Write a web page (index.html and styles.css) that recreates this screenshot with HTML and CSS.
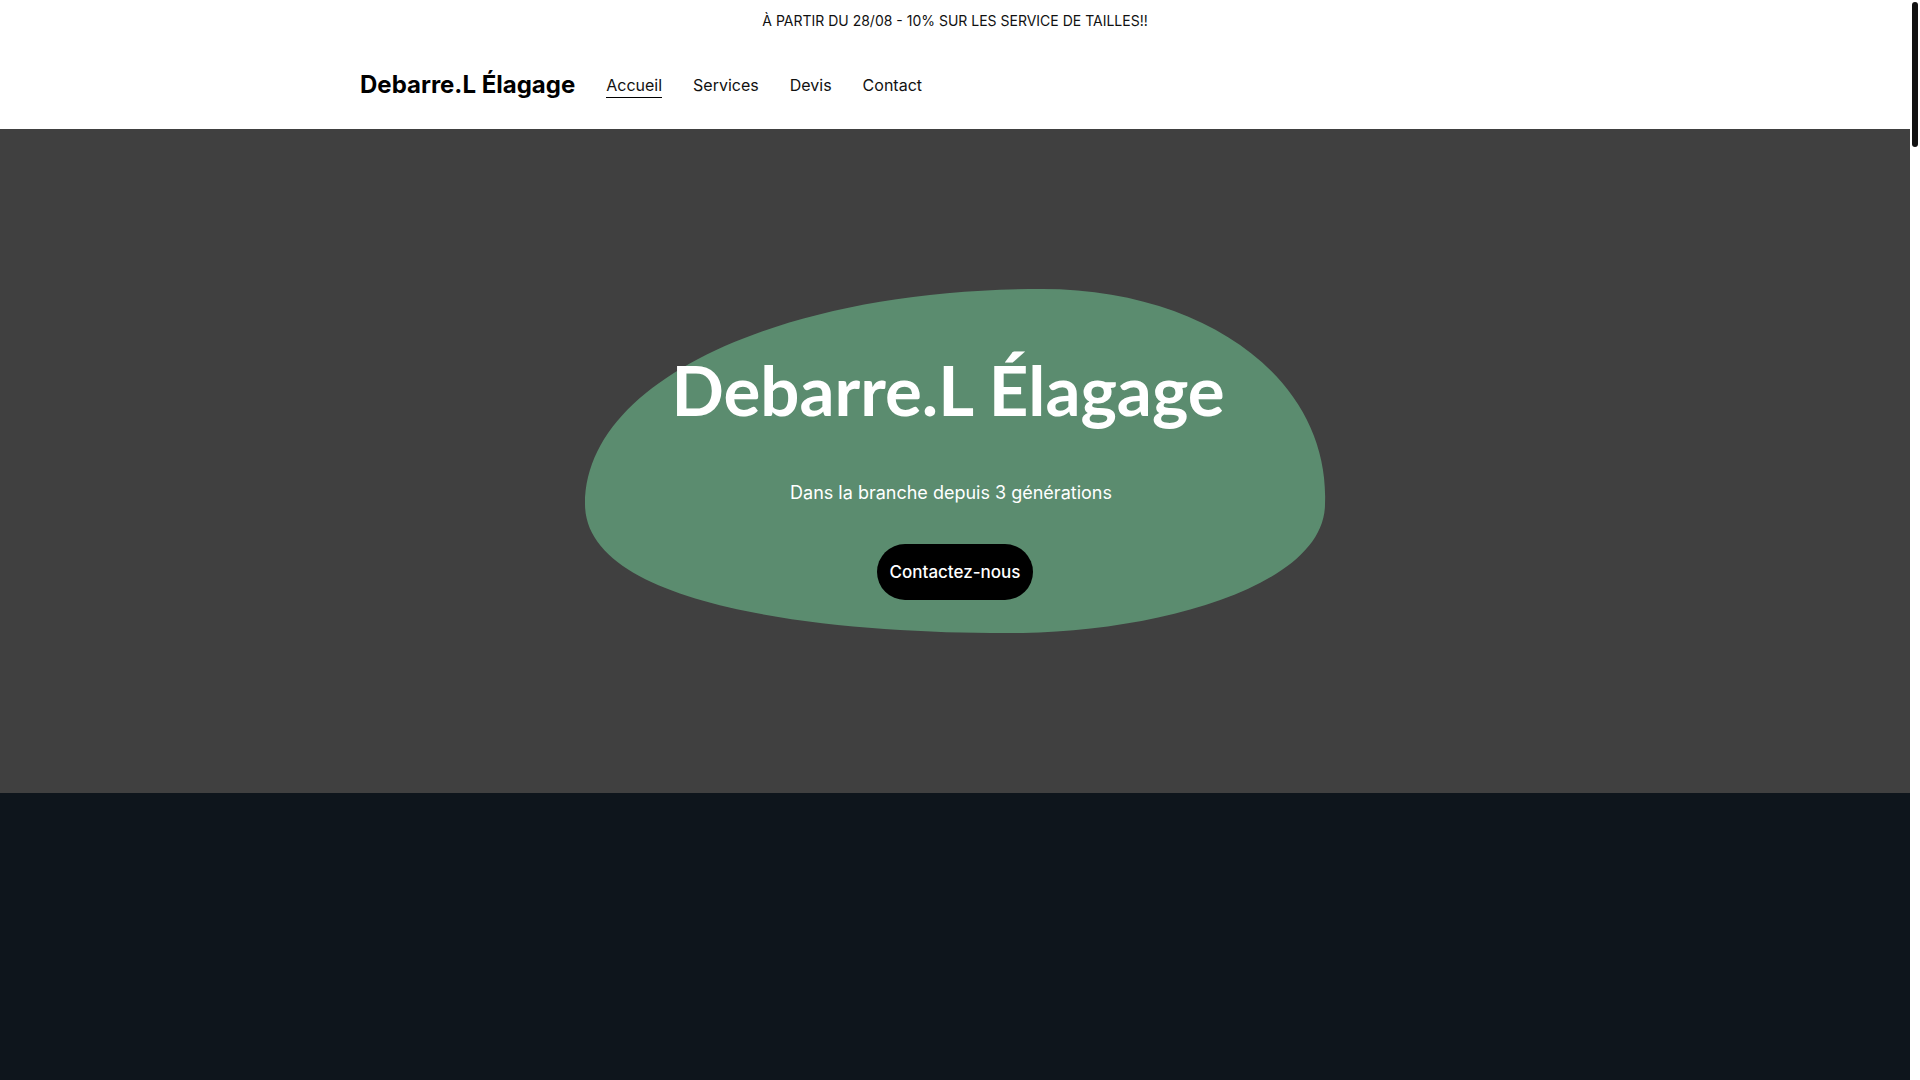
FILE: index.html
```html
<!DOCTYPE html>
<html lang="fr">
<head>
<meta charset="utf-8">
<title>Debarre.L Élagage</title>
<link rel="stylesheet" href="styles.css">
</head>
<body>
<div class="page">
  <header class="site-header">
    <div class="announcement">À PARTIR DU 28/08 - 10% SUR LES SERVICE DE TAILLES!!</div>
    <nav class="navbar">
      <a class="brand" href="#">Debarre.L Élagage</a>
      <ul class="nav-links">
        <li><a class="nav-link active" href="#">Accueil</a></li>
        <li><a class="nav-link" href="#">Services</a></li>
        <li><a class="nav-link" href="#">Devis</a></li>
        <li><a class="nav-link" href="#">Contact</a></li>
      </ul>
    </nav>
  </header>
  <main>
    <section class="hero">
      <svg class="hero-blob" width="741" height="344" viewBox="0 0 741 344" aria-hidden="true">
        <path d="M457 0 C620 0 745 90 740 215 C740 300 560 346 420 344 C250 344 0 320 0 215 C0 90 200 0 457 0 Z" fill="#5b8c6f"/>
      </svg>
      <div class="hero-content">
        <h1 class="hero-title">Debarre.L Élagage</h1>
        <p class="hero-subtitle">Dans la branche depuis 3 générations</p>
        <a class="hero-button" href="#">Contactez-nous</a>
      </div>
    </section>
    <section class="dark-section"></section>
  </main>
</div>
<div class="scrollbar" aria-hidden="true"><div class="scrollbar-thumb"></div></div>
</body>
</html>
```

FILE: styles.css
```css
html, body {
  margin: 0;
  padding: 0;
}

html {
  overflow: hidden;
}

body {
  font-family: "Inter", "Liberation Sans", sans-serif;
  color: #000;
  background: #ffffff;
}

a {
  color: inherit;
  text-decoration: none;
}

.page {
  margin-right: 10px;
}

.site-header {
  background: #ffffff;
}

.announcement {
  height: 40px;
  display: flex;
  align-items: center;
  justify-content: center;
  font-size: 14px;
  color: #111;
}

.navbar {
  max-width: 1190px;
  margin: 0 auto;
  height: 89px;
  display: flex;
  align-items: center;
  gap: 31px;
}

.brand {
  font-size: 24px;
  font-weight: 700;
  color: #000;
}

.nav-links {
  list-style: none;
  margin: 0;
  padding: 0;
  display: flex;
  gap: 31px;
}

.nav-link {
  font-size: 16px;
  color: #111;
  padding-bottom: 2px;
}

.nav-link.active {
  border-bottom: 1px solid #000;
}

.hero {
  height: 664px;
  background: #404040;
  display: grid;
  place-items: center;
}

.hero-blob,
.hero-content {
  grid-area: 1 / 1;
}

.hero-content {
  position: relative;
  display: flex;
  flex-direction: column;
  align-items: center;
  margin-top: 27px;
}

.hero-title {
  margin: 0 14px 0 0;
  font-family: "Lato", "Inter", sans-serif;
  font-weight: 700;
  font-size: 69px;
  line-height: 82px;
  color: #ffffff;
}

.hero-subtitle {
  margin: 48px 8px 0 0;
  font-size: 18px;
  line-height: 28px;
  color: #ffffff;
}

.hero-button {
  margin-top: 37px;
  height: 56px;
  padding: 0 13px;
  display: flex;
  align-items: center;
  border-radius: 28px;
  background: #000;
  color: #fff;
  font-size: 17px;
  font-weight: 500;
}

.dark-section {
  height: 600px;
  background: #0e151c;
}

.scrollbar {
  position: fixed;
  top: 0;
  right: 0;
  width: 10px;
  height: 100vh;
  background: #ffffff;
}

.scrollbar-thumb {
  margin: 2px 2px 0;
  height: 145px;
  border-radius: 3px;
  background: #111111;
}
```
